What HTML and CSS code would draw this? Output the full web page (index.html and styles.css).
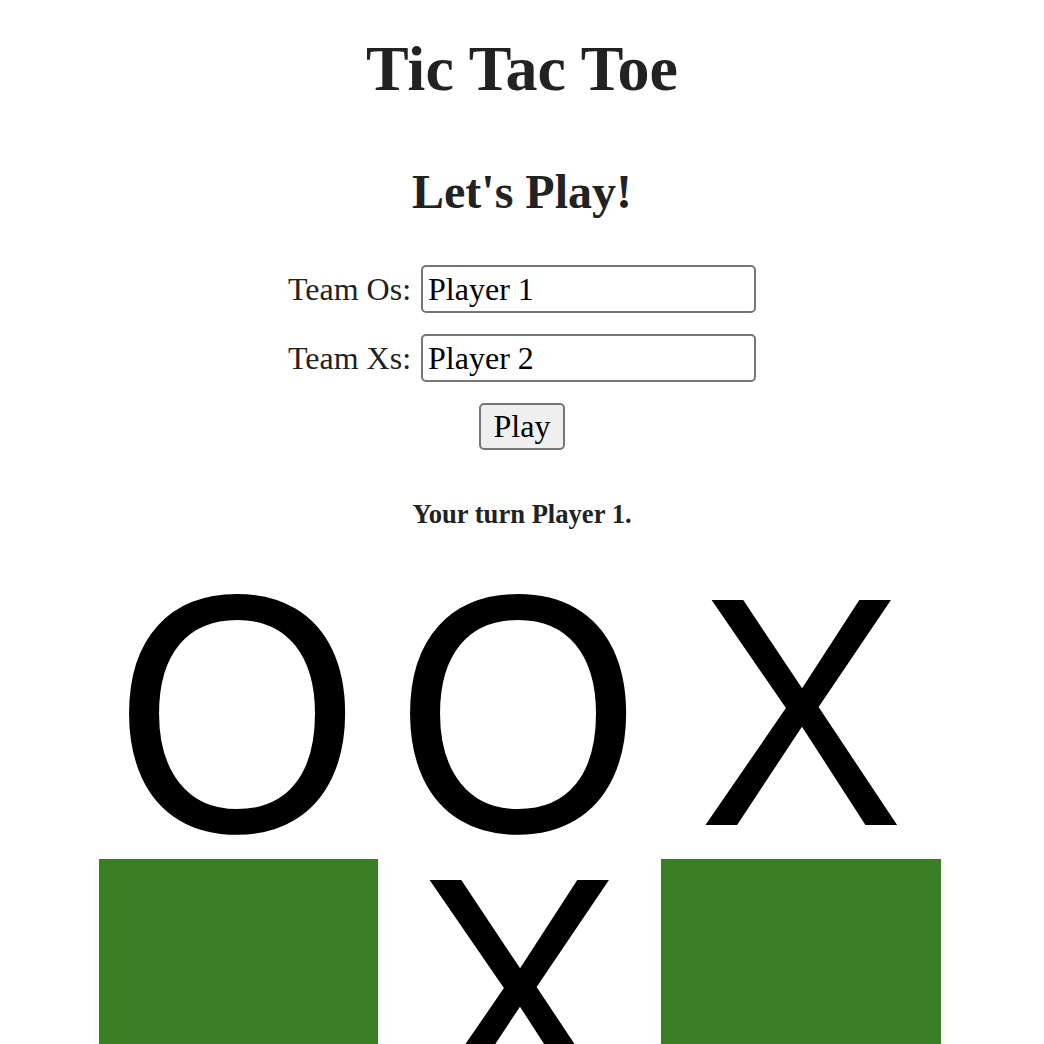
FILE: index.html
```html
<!DOCTYPE html>
<html lang="en">
<head>
<meta charset="utf-8">
<title>Tic Tac Toe</title>
<link rel="stylesheet" href="styles.css">
</head>
<body>
  <h1 class="title">Tic Tac Toe</h1>
  <h2 class="subtitle">Let's Play!</h2>
  <form class="setup">
    <div class="field">
      <label class="field-label" for="team-o">Team Os:</label>
      <input class="field-input" id="team-o" type="text" value="Player 1">
    </div>
    <div class="field">
      <label class="field-label" for="team-x">Team Xs:</label>
      <input class="field-input" id="team-x" type="text" value="Player 2">
    </div>
    <div class="actions">
      <button class="play-btn" type="button">Play</button>
    </div>
  </form>
  <h5 class="status">Your turn Player 1.</h5>
  <div class="board">
    <div class="cell"><span class="mark mark-o">O</span></div>
    <div class="cell"><span class="mark mark-o">O</span></div>
    <div class="cell"><span class="mark">X</span></div>
    <div class="cell empty"></div>
    <div class="cell"><span class="mark">X</span></div>
    <div class="cell empty"></div>
    <div class="cell empty"></div>
    <div class="cell empty"></div>
    <div class="cell empty"></div>
  </div>
</body>
</html>
```
FILE: styles.css
```css
html, body {
  margin: 0;
  padding: 0;
  background: #ffffff;
}

body {
  font-family: "Liberation Serif", "Times New Roman", serif;
  font-size: 32px;
  color: #222222;
  text-align: center;
}

.title {
  margin: 32px 0 0;
  font-size: 64px;
  line-height: 74px;
  font-weight: bold;
}

.subtitle {
  margin: 57.5px 0 0;
  font-size: 48px;
  line-height: 55px;
  font-weight: bold;
}

.setup {
  margin: 46.5px 0 0;
  display: flex;
  flex-direction: column;
  align-items: center;
  gap: 21px;
}

.field {
  display: flex;
  align-items: center;
  justify-content: center;
  gap: 10px;
}

.field-label {
  font-size: 32px;
  line-height: 36px;
}

.field-input {
  box-sizing: border-box;
  width: 335px;
  height: 48px;
  margin: 0;
  padding: 0 5px;
  border: 2px solid #767676;
  border-radius: 5px;
  font-family: "Liberation Serif", "Times New Roman", serif;
  font-size: 32px;
  color: #000000;
  background: #ffffff;
}

.actions {
  display: flex;
  justify-content: center;
}

.play-btn {
  box-sizing: border-box;
  width: 86px;
  height: 47px;
  margin: 0;
  padding: 0;
  border: 2px solid #767676;
  border-radius: 5px;
  background: #efefef;
  font-family: "Liberation Serif", "Times New Roman", serif;
  font-size: 32px;
  color: #000000;
}

.status {
  margin: 48.5px 0 0;
  font-size: 26.6px;
  line-height: 31px;
  font-weight: bold;
}

.board {
  margin: 49.5px 0 0 99px;
  width: 842px;
  display: grid;
  grid-template-columns: 279px 283px 280px;
  grid-auto-rows: 280px;
}

.cell {
  display: flex;
  align-items: center;
  justify-content: center;
  padding-bottom: 14px;
  box-sizing: border-box;
  overflow: hidden;
}

.mark {
  display: inline-block;
  font-family: "Liberation Sans", Arial, sans-serif;
  font-size: 327px;
  line-height: 266px;
  color: #000000;
  transform: scaleX(0.94);
}

.mark-o {
  transform: translate(-1px, 2px) scale(0.968, 1.04);
}

.cell.empty {
  background: #3a7e24;
}
```
